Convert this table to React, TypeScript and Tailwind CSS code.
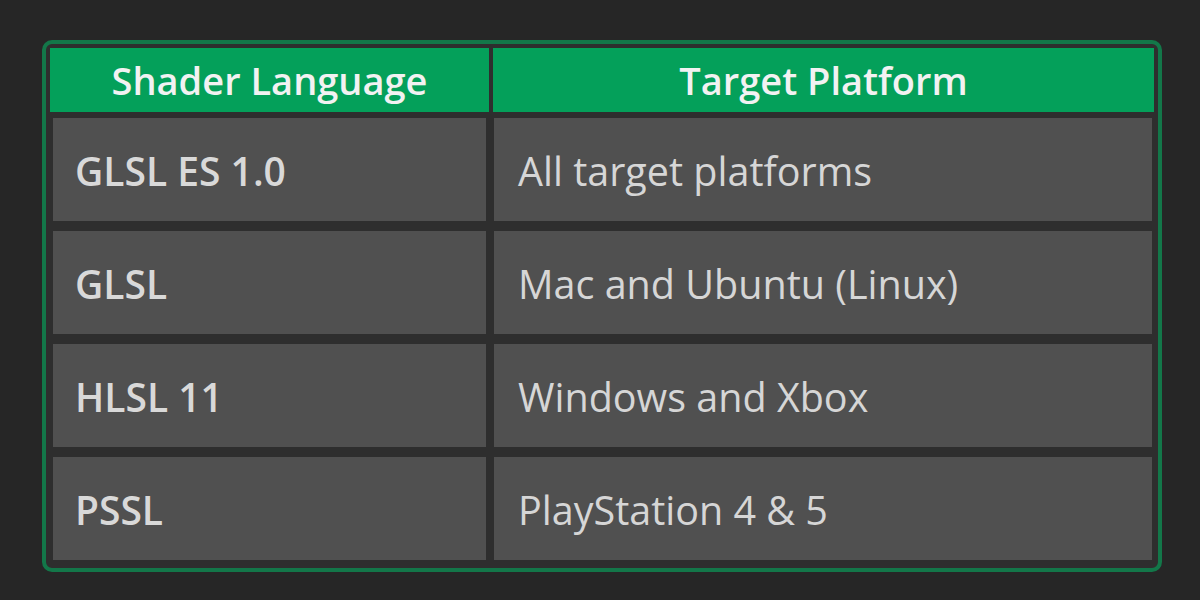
import React from 'react';

const rows = [
    { lang: 'GLSL ES 1.0', platform: 'All target platforms' },
    { lang: 'GLSL', platform: 'Mac and Ubuntu (Linux)' },
    { lang: 'HLSL 11', platform: 'Windows and Xbox' },
    { lang: 'PSSL', platform: 'PlayStation 4 & 5' },
];

const App = () => {
    return (
        <div className="w-[1200px] h-[600px] bg-[#262626] pt-[40px] pl-[42px] font-['Open_Sans',sans-serif]">
            <div className="w-[1120px] h-[532px] rounded-[10px] border-4 border-[#137749] bg-[#2e2e2e] pt-1 pl-1 pr-1">
                {/* header */}
                <div className="grid grid-cols-[439px_1fr] gap-1 h-16">
                    <div className="bg-[#04a05a] flex items-center justify-center text-[38px] font-semibold text-[#f2f2f2]">
                        Shader Language
                    </div>
                    <div className="bg-[#04a05a] flex items-center justify-center text-[38px] font-semibold text-[#f2f2f2]">
                        Target Platform
                    </div>
                </div>

                {/* body */}
                <div className="mt-[6px] pl-[3px] pr-[2px] grid grid-cols-[433px_1fr] gap-x-2 gap-y-[10px]">
                    {rows.map((row) => (
                        <React.Fragment key={row.lang}>
                            <div className="h-[103px] bg-[#505050] flex items-center pl-[22px] pt-[4px] text-[39px] font-semibold text-[#d9d9d9]">
                                {row.lang}
                            </div>
                            <div className="h-[103px] bg-[#505050] flex items-center pl-6 pt-[4px] text-[39.5px] text-[#d6d6d6]">
                                {row.platform}
                            </div>
                        </React.Fragment>
                    ))}
                </div>
            </div>
        </div>
    );
};

export default App;
